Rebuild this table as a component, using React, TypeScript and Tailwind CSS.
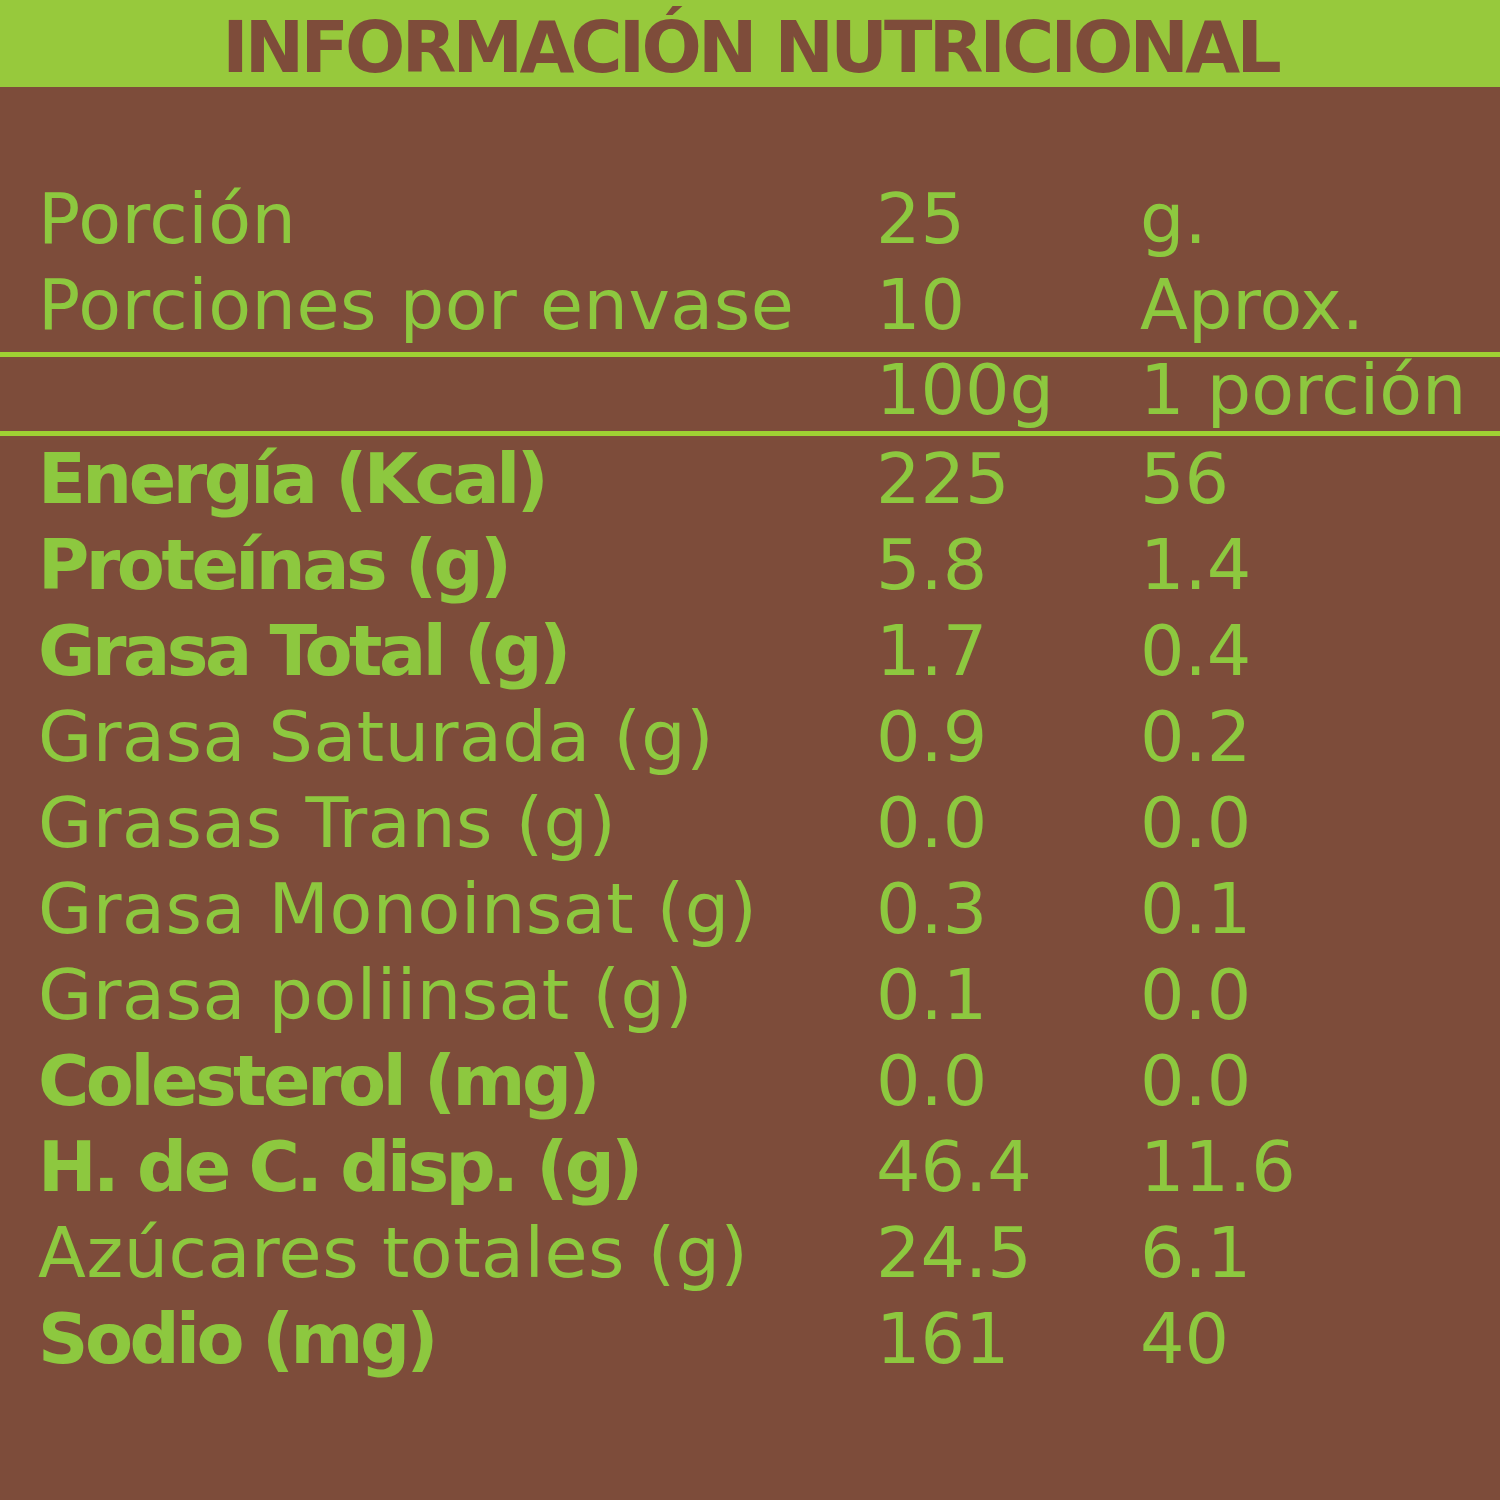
const rows: { label: string; a: string; b: string; bold?: boolean }[] = [
  { label: 'Energía (Kcal)', a: '225', b: '56', bold: true },
  { label: 'Proteínas (g)', a: '5.8', b: '1.4', bold: true },
  { label: 'Grasa Total (g)', a: '1.7', b: '0.4', bold: true },
  { label: 'Grasa Saturada (g)', a: '0.9', b: '0.2' },
  { label: 'Grasas Trans (g)', a: '0.0', b: '0.0' },
  { label: 'Grasa Monoinsat (g)', a: '0.3', b: '0.1' },
  { label: 'Grasa poliinsat (g)', a: '0.1', b: '0.0' },
  { label: 'Colesterol (mg)', a: '0.0', b: '0.0', bold: true },
  { label: 'H. de C. disp. (g)', a: '46.4', b: '11.6', bold: true },
  { label: 'Azúcares totales (g)', a: '24.5', b: '6.1' },
  { label: 'Sodio (mg)', a: '161', b: '40', bold: true },
]

function Row({ label, a, b, bold }: { label: string; a: string; b: string; bold?: boolean }) {
  return (
    <div className="grid grid-cols-[838px_264px_1fr] pl-[38px] h-[86px] leading-[86px] whitespace-nowrap">
      <span className={bold ? 'font-bold tracking-[-3.5px]' : 'tracking-[0.5px]'}>{label}</span>
      <span>{a}</span>
      <span>{b}</span>
    </div>
  )
}

export default function App() {
  return (
    <div
      className="w-[1500px] h-[1500px] bg-[#7d4c3a] text-[#8dc83f] text-[70px] overflow-hidden"
      style={{ fontFamily: '"DejaVu Sans", "Liberation Sans", sans-serif' }}
    >
      <div className="h-[87px] bg-[#97c93c] flex items-center justify-center">
        <h1 className="text-[71px] font-bold leading-none tracking-[-3.8px] text-[#7e4c3a] mt-[8px]">
          INFORMACIÓN NUTRICIONAL
        </h1>
      </div>

      <div className="pt-[89px]">
        <Row label="Porción" a="25" b="g." />
        <Row label="Porciones por envase" a="10" b="Aprox." />
      </div>

      <div className="mt-[4px] h-[5px] bg-[#9fd033]" />
      <div className="grid grid-cols-[838px_264px_1fr] pl-[38px] h-[74px] leading-[66px] whitespace-nowrap">
        <span />
        <span>100g</span>
        <span>1 porción</span>
      </div>
      <div className="h-[5px] bg-[#9fd033]" />

      <div>
        {rows.map((r) => (
          <Row key={r.label} {...r} />
        ))}
      </div>
    </div>
  )
}
